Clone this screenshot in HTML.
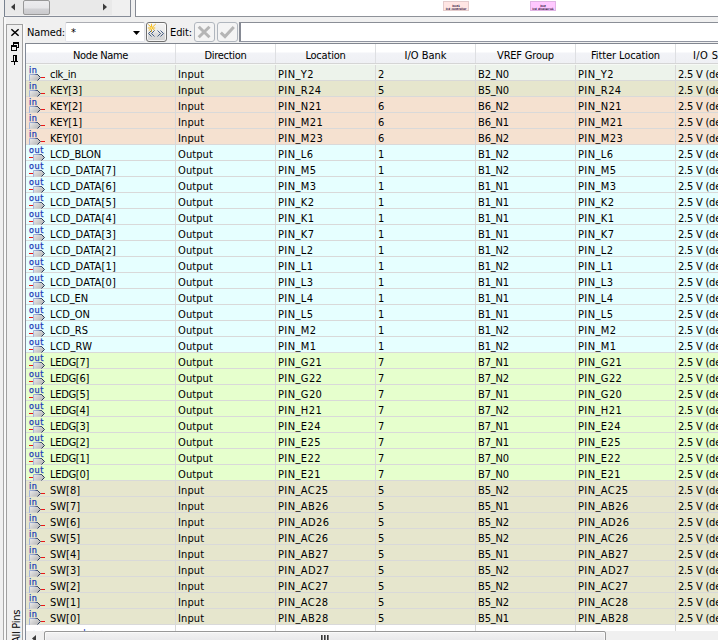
<!DOCTYPE html>
<html><head><meta charset="utf-8"><title>Pin Planner</title>
<style>
html,body{margin:0;padding:0;}
body{width:718px;height:640px;overflow:hidden;background:#f0f0f0;position:relative;font-family:"DejaVu Sans Condensed","DejaVu Sans","Liberation Sans",sans-serif;font-stretch:condensed;font-size:11px;color:#000;}
.abs{position:absolute;}
svg{position:absolute;overflow:visible}
/* top area */
#tl{left:4px;top:0;width:127px;height:17px;background:#f0f0f0;border-left:1px solid #78828f;border-right:1px solid #828893;border-bottom:1px solid #868c98;box-sizing:border-box;}
#trk{left:5px;top:0;width:107px;height:15px;background:#e9e9e9;}
#thumb1{left:23px;top:0;width:27px;height:15px;box-sizing:border-box;border:1px solid #989898;border-radius:2px;background:linear-gradient(#ececee 0,#e6e6e8 7px,#d2d2d5 8px,#cacacd 100%);}
#tr{left:135px;top:0;width:583px;height:17px;background:#fff;border-left:1px solid #868a93;border-bottom:1px solid #8e9299;box-sizing:border-box;}
.pk{top:1px;height:10px;width:26px;box-sizing:border-box;border:1px solid #e4cccc;font-size:3px;line-height:3px;font-weight:bold;text-align:center;color:#281038;padding-top:3px;overflow:hidden;letter-spacing:0;white-space:nowrap}
#pk1{left:443px;background:#ffe6e4;}
#pk2{left:530px;background:#ffc8ff;border-color:#e0b4e4}
/* left strip */
#vl{left:3px;top:17px;width:1px;height:623px;background:#a8a8a8}
#vl2{left:4px;top:17px;width:2px;height:623px;background:#f8f8f8}
#strip{left:6px;top:24px;width:17px;height:620px;box-sizing:border-box;border:1px solid #a0a0a0;background:#f0f0f0}
#vl3{left:23px;top:24px;width:2px;height:620px;background:#f8f8f8}
#allpins{left:10px;top:643px;width:60px;height:13px;line-height:13px;transform-origin:0 0;transform:rotate(-90deg);letter-spacing:-0.29px;white-space:nowrap}
/* toolbar */
#named{left:27px;top:22px;height:20px;line-height:21px;letter-spacing:-0.13px}
#combo{left:65px;top:22px;width:80px;height:20px;box-sizing:border-box;background:#fff;border:1px solid #e2e3ea;border-top-color:#abadb3;border-radius:2px;}
#star{left:71px;top:22px;height:20px;line-height:21px}
#btn1{left:146px;top:22px;width:21px;height:20px;box-sizing:border-box;border:1px solid #707070;border-radius:3px;background:linear-gradient(#f2f2f2 0,#ebebeb 9px,#dddddd 10px,#d2d2d2 100%);box-shadow:inset 0 0 0 1px rgba(255,255,255,.7)}
#edit{left:170px;top:22px;height:20px;line-height:21px;letter-spacing:-0.1px}
.dbtn{top:22px;width:21px;height:20px;box-sizing:border-box;border:1px solid #b0b6be;border-radius:3px;background:#f4f4f4}
#btn2{left:194px}#btn3{left:217px}
#field{left:239px;top:22px;width:490px;height:20px;box-sizing:border-box;background:#fff;border:1px solid #8a8e96;border-left:2px solid #868a94;border-bottom-color:#9094a0}
/* table frame */
#frame{left:25px;top:43px;width:693px;height:600px;background:#fff;border-left:1px solid #828a98;border-top:1px solid #828790;box-sizing:border-box;}
#hdr{left:26px;top:44px;width:692px;height:19px;background:linear-gradient(#fff 0,#fff 8px,#f2f3f7 9px,#eff0f4 19px);border-bottom:1px solid #d5d5d5;white-space:nowrap;}
.h{display:inline-block;vertical-align:top;height:19px;line-height:23px;box-sizing:border-box;border-right:1px solid #dedfe2;text-align:center;overflow:hidden;letter-spacing:-0.2px}
.h0{letter-spacing:-0.35px}
.h0{width:150px}.h1,.h2,.h3,.h4,.h5{width:100px}.h6{width:43px;border-right:0;text-align:left;padding-left:17px;letter-spacing:0.4px}
.h3{letter-spacing:0}.h5{letter-spacing:-0.1px}.h1{letter-spacing:-0.3px}
/* table */
.tbl{position:absolute;left:26px;top:64px;width:692px;}
.r{height:16px;display:block;white-space:nowrap;box-sizing:border-box;border-bottom:1px solid #d9d9d9;}
.r:first-child{height:17px;border-top:1px solid #f6f9f5}
.c{display:inline-block;vertical-align:top;height:15px;line-height:19px;box-sizing:border-box;border-right:1px solid #d9d9d9;padding-left:2px;}
.c0{width:150px;padding-left:0;position:relative}
.c1,.c2,.c3,.c4,.c5{width:100px}
.c1{letter-spacing:0.1px}.c2,.c5{letter-spacing:0.4px}.c3{letter-spacing:0}.c4{letter-spacing:-0.15px}
.c6{width:43px;border-right:0;letter-spacing:-0.22px}
.c0 em{font-style:normal;position:absolute;left:24px;top:0}
.ic{position:absolute;left:0;top:0;width:24px;height:16px;font-style:normal}
.ic b{position:absolute;left:3px;top:-1px;font-weight:normal;font-size:9px;line-height:12px;color:#1c3cb8;letter-spacing:0.6px;opacity:0.99;-webkit-text-stroke:0.25px #1c3cb8}
.ic svg{left:2px;top:0}
.b2{background:#edf3eb}.b5{background:#e6e6cd}.b6{background:#f5e1d0}.b1{background:#e6ffff}.b7{background:#e6ffcd}
.last{background:#fff;border-bottom:0;height:6px}
.last .c{height:6px}
/* bottom scrollbar */
#sb{left:26px;top:631px;width:692px;height:17px;background:#f0f0f0}
#thumb2{left:44px;top:631px;width:562px;height:17px;box-sizing:border-box;border:1px solid #989898;border-radius:2px;background:linear-gradient(#f3f3f3 0,#e9e9eb 8px,#d6d6d9 9px,#cbcbce 100%);box-shadow:inset 0 0 0 1px rgba(255,255,255,.6)}

.c u{text-decoration:none;position:relative;top:-1px}
.last .c0 em.nn{color:#2040c0;top:-1px;left:1px}

</style></head>
<body>
<div class="abs" id="tl"></div>
<div class="abs" id="trk"></div>
<div class="abs" id="thumb1"></div>
<svg style="left:10px;top:3px" width="100" height="9" viewBox="0 0 100 9"><path d="M5 0.5V7.5L1 4Z" fill="#3c3c3c"/><path d="M93 0.5V7.5L97 4Z" fill="#3c3c3c"/></svg>
<div class="abs" id="tr"></div>
<div class="abs pk" id="pk1">inst1<br>lcd_controller</div>
<div class="abs pk" id="pk2">inst<br>lcd_display:u1</div>
<div class="abs" id="vl"></div><div class="abs" id="vl2"></div>
<div class="abs" id="strip"></div><div class="abs" id="vl3"></div>
<svg style="left:11px;top:29px" width="8" height="36" viewBox="0 0 8 36">
<path d="M0.4 0.2L7.6 6.8M7.6 0.2L0.4 6.8" stroke="#000" stroke-width="1.5" fill="none"/>
<path d="M2 13h6v6h-2v-1h1v-3h-4v1h-1zM0 16h6v6h-6zM1 18v3h4v-3z" fill="#000" fill-rule="evenodd" shape-rendering="crispEdges"/>
<path d="M2 26h4v6h1v1h-3v3h-1v-3h-3v-1h2zM3 27v5h1v-5z" fill="#000" fill-rule="evenodd" shape-rendering="crispEdges"/>
</svg>
<div class="abs" id="allpins">All Pins</div>
<div class="abs" id="named">Named:</div>
<div class="abs" id="combo"></div>
<div class="abs" id="star">*</div>
<svg style="left:133px;top:31px" width="7" height="4" viewBox="0 0 7 4"><path d="M0 0H7L3.5 4Z" fill="#000"/></svg>
<div class="abs" id="btn1"></div>
<svg style="left:147px;top:23px" width="19" height="18" viewBox="0 0 19 18">
<path d="M4.5 0.8V9M0.8 5H8.2M1.3 1.5L7.8 7.6M8.8 1L1.8 7.6" stroke="#f7b500" stroke-width="0.85" fill="none"/><circle cx="4.5" cy="5" r="1.1" fill="#fbd040"/><circle cx="4.5" cy="5" r="0.6" fill="#fff6d0"/>
<path d="M4.5 7.5L1.5 10.5L4.5 13.5M7.5 7.5L4.5 10.5L7.5 13.5M10.5 7.5L13.5 10.5L10.5 13.5M13.5 7.5L16.5 10.5L13.5 13.5" stroke="#34507c" stroke-width="0.9" fill="none"/>
</svg>
<div class="abs" id="edit">Edit:</div>
<div class="abs dbtn" id="btn2"></div>
<div class="abs dbtn" id="btn3"></div>
<svg style="left:194px;top:22px" width="44" height="20" viewBox="0 0 44 20">
<path d="M4.7 4.7L15.5 15.3M15.5 4.7L4.7 15.3" stroke="#b5b5b5" stroke-width="3" fill="none"/>
<path d="M26.8 10.6L31 14.6L39.8 5" stroke="#b5b5b5" stroke-width="3" fill="none"/>
</svg>
<div class="abs" id="field"></div>
<div class="abs" id="frame"></div>
<div class="abs" id="hdr"><span class="h h0">Node Name</span><span class="h h1">Direction</span><span class="h h2">Location</span><span class="h h3">I/O Bank</span><span class="h h4">VREF Group</span><span class="h h5">Fitter Location</span><span class="h h6">I/O Standard</span></div>
<svg width="0" height="0" style="left:0;top:0"><defs><linearGradient id="g" x1="0" y1="0" x2="1" y2="0.6"><stop offset="0" stop-color="#ececec"/><stop offset="1" stop-color="#b8b8b8"/></linearGradient><linearGradient id="gl" x1="0" y1="0" x2="1" y2="0"><stop offset="0" stop-color="#a4b4dc"/><stop offset="0.6" stop-color="#8c9cc4"/><stop offset="1" stop-color="#34446a"/></linearGradient></defs></svg>
<div class="tbl">
<div class="r b2"><span class="c c0"><i class="ic"><b>in</b><svg width="18" height="16" viewBox="0 0 18 16"><path d="M1.5 9.5H9.5L12.5 12.5L9.5 15.5H1.5Z" fill="url(#g)"/><path d="M1.5 16V9.5H9.5" stroke="url(#gl)" fill="none"/><path d="M9 9.5H9.5L12.5 12.5L9.5 15.5" stroke="#2c3c5c" fill="none"/><path d="M13 12.5H17" stroke="#e81818"/></svg></i><em style="letter-spacing:-0.3px">clk<u>_</u>in</em></span><span class="c c1">Input</span><span class="c c2">PIN<u>_</u>Y2</span><span class="c c3">2</span><span class="c c4">B2<u>_</u>N0</span><span class="c c5">PIN<u>_</u>Y2</span><span class="c c6">2.5 V (default)</span></div>
<div class="r b5"><span class="c c0"><i class="ic"><b>in</b><svg width="18" height="16" viewBox="0 0 18 16"><path d="M1.5 9.5H9.5L12.5 12.5L9.5 15.5H1.5Z" fill="url(#g)"/><path d="M1.5 16V9.5H9.5" stroke="url(#gl)" fill="none"/><path d="M9 9.5H9.5L12.5 12.5L9.5 15.5" stroke="#2c3c5c" fill="none"/><path d="M13 12.5H17" stroke="#e81818"/></svg></i><em style="letter-spacing:-0.15px">KEY[3]</em></span><span class="c c1">Input</span><span class="c c2">PIN<u>_</u>R24</span><span class="c c3">5</span><span class="c c4">B5<u>_</u>N0</span><span class="c c5">PIN<u>_</u>R24</span><span class="c c6">2.5 V (default)</span></div>
<div class="r b6"><span class="c c0"><i class="ic"><b>in</b><svg width="18" height="16" viewBox="0 0 18 16"><path d="M1.5 9.5H9.5L12.5 12.5L9.5 15.5H1.5Z" fill="url(#g)"/><path d="M1.5 16V9.5H9.5" stroke="url(#gl)" fill="none"/><path d="M9 9.5H9.5L12.5 12.5L9.5 15.5" stroke="#2c3c5c" fill="none"/><path d="M13 12.5H17" stroke="#e81818"/></svg></i><em style="letter-spacing:-0.15px">KEY[2]</em></span><span class="c c1">Input</span><span class="c c2">PIN<u>_</u>N21</span><span class="c c3">6</span><span class="c c4">B6<u>_</u>N2</span><span class="c c5">PIN<u>_</u>N21</span><span class="c c6">2.5 V (default)</span></div>
<div class="r b6"><span class="c c0"><i class="ic"><b>in</b><svg width="18" height="16" viewBox="0 0 18 16"><path d="M1.5 9.5H9.5L12.5 12.5L9.5 15.5H1.5Z" fill="url(#g)"/><path d="M1.5 16V9.5H9.5" stroke="url(#gl)" fill="none"/><path d="M9 9.5H9.5L12.5 12.5L9.5 15.5" stroke="#2c3c5c" fill="none"/><path d="M13 12.5H17" stroke="#e81818"/></svg></i><em style="letter-spacing:-0.15px">KEY[1]</em></span><span class="c c1">Input</span><span class="c c2">PIN<u>_</u>M21</span><span class="c c3">6</span><span class="c c4">B6<u>_</u>N1</span><span class="c c5">PIN<u>_</u>M21</span><span class="c c6">2.5 V (default)</span></div>
<div class="r b6"><span class="c c0"><i class="ic"><b>in</b><svg width="18" height="16" viewBox="0 0 18 16"><path d="M1.5 9.5H9.5L12.5 12.5L9.5 15.5H1.5Z" fill="url(#g)"/><path d="M1.5 16V9.5H9.5" stroke="url(#gl)" fill="none"/><path d="M9 9.5H9.5L12.5 12.5L9.5 15.5" stroke="#2c3c5c" fill="none"/><path d="M13 12.5H17" stroke="#e81818"/></svg></i><em style="letter-spacing:-0.15px">KEY[0]</em></span><span class="c c1">Input</span><span class="c c2">PIN<u>_</u>M23</span><span class="c c3">6</span><span class="c c4">B6<u>_</u>N2</span><span class="c c5">PIN<u>_</u>M23</span><span class="c c6">2.5 V (default)</span></div>
<div class="r b1"><span class="c c0"><i class="ic"><b>out</b><svg width="20" height="16" viewBox="0 0 20 16"><path d="M5.5 9.5H13.5L16.5 12.5L13.5 15.5H5.5Z" fill="url(#g)"/><path d="M5.5 16V9.5H13.5" stroke="url(#gl)" fill="none"/><path d="M13 9.5H13.5L16.5 12.5L13.5 15.5" stroke="#2c3c5c" fill="none"/><path d="M1 12.5H5" stroke="#e81818"/></svg></i><em style="letter-spacing:-0.15px">LCD<u>_</u>BLON</em></span><span class="c c1">Output</span><span class="c c2">PIN<u>_</u>L6</span><span class="c c3">1</span><span class="c c4">B1<u>_</u>N2</span><span class="c c5">PIN<u>_</u>L6</span><span class="c c6">2.5 V (default)</span></div>
<div class="r b1"><span class="c c0"><i class="ic"><b>out</b><svg width="20" height="16" viewBox="0 0 20 16"><path d="M5.5 9.5H13.5L16.5 12.5L13.5 15.5H5.5Z" fill="url(#g)"/><path d="M5.5 16V9.5H13.5" stroke="url(#gl)" fill="none"/><path d="M13 9.5H13.5L16.5 12.5L13.5 15.5" stroke="#2c3c5c" fill="none"/><path d="M1 12.5H5" stroke="#e81818"/></svg></i><em style="letter-spacing:0.15px">LCD<u>_</u>DATA[7]</em></span><span class="c c1">Output</span><span class="c c2">PIN<u>_</u>M5</span><span class="c c3">1</span><span class="c c4">B1<u>_</u>N2</span><span class="c c5">PIN<u>_</u>M5</span><span class="c c6">2.5 V (default)</span></div>
<div class="r b1"><span class="c c0"><i class="ic"><b>out</b><svg width="20" height="16" viewBox="0 0 20 16"><path d="M5.5 9.5H13.5L16.5 12.5L13.5 15.5H5.5Z" fill="url(#g)"/><path d="M5.5 16V9.5H13.5" stroke="url(#gl)" fill="none"/><path d="M13 9.5H13.5L16.5 12.5L13.5 15.5" stroke="#2c3c5c" fill="none"/><path d="M1 12.5H5" stroke="#e81818"/></svg></i><em style="letter-spacing:0.15px">LCD<u>_</u>DATA[6]</em></span><span class="c c1">Output</span><span class="c c2">PIN<u>_</u>M3</span><span class="c c3">1</span><span class="c c4">B1<u>_</u>N1</span><span class="c c5">PIN<u>_</u>M3</span><span class="c c6">2.5 V (default)</span></div>
<div class="r b1"><span class="c c0"><i class="ic"><b>out</b><svg width="20" height="16" viewBox="0 0 20 16"><path d="M5.5 9.5H13.5L16.5 12.5L13.5 15.5H5.5Z" fill="url(#g)"/><path d="M5.5 16V9.5H13.5" stroke="url(#gl)" fill="none"/><path d="M13 9.5H13.5L16.5 12.5L13.5 15.5" stroke="#2c3c5c" fill="none"/><path d="M1 12.5H5" stroke="#e81818"/></svg></i><em style="letter-spacing:0.15px">LCD<u>_</u>DATA[5]</em></span><span class="c c1">Output</span><span class="c c2">PIN<u>_</u>K2</span><span class="c c3">1</span><span class="c c4">B1<u>_</u>N1</span><span class="c c5">PIN<u>_</u>K2</span><span class="c c6">2.5 V (default)</span></div>
<div class="r b1"><span class="c c0"><i class="ic"><b>out</b><svg width="20" height="16" viewBox="0 0 20 16"><path d="M5.5 9.5H13.5L16.5 12.5L13.5 15.5H5.5Z" fill="url(#g)"/><path d="M5.5 16V9.5H13.5" stroke="url(#gl)" fill="none"/><path d="M13 9.5H13.5L16.5 12.5L13.5 15.5" stroke="#2c3c5c" fill="none"/><path d="M1 12.5H5" stroke="#e81818"/></svg></i><em style="letter-spacing:0.15px">LCD<u>_</u>DATA[4]</em></span><span class="c c1">Output</span><span class="c c2">PIN<u>_</u>K1</span><span class="c c3">1</span><span class="c c4">B1<u>_</u>N1</span><span class="c c5">PIN<u>_</u>K1</span><span class="c c6">2.5 V (default)</span></div>
<div class="r b1"><span class="c c0"><i class="ic"><b>out</b><svg width="20" height="16" viewBox="0 0 20 16"><path d="M5.5 9.5H13.5L16.5 12.5L13.5 15.5H5.5Z" fill="url(#g)"/><path d="M5.5 16V9.5H13.5" stroke="url(#gl)" fill="none"/><path d="M13 9.5H13.5L16.5 12.5L13.5 15.5" stroke="#2c3c5c" fill="none"/><path d="M1 12.5H5" stroke="#e81818"/></svg></i><em style="letter-spacing:0.15px">LCD<u>_</u>DATA[3]</em></span><span class="c c1">Output</span><span class="c c2">PIN<u>_</u>K7</span><span class="c c3">1</span><span class="c c4">B1<u>_</u>N1</span><span class="c c5">PIN<u>_</u>K7</span><span class="c c6">2.5 V (default)</span></div>
<div class="r b1"><span class="c c0"><i class="ic"><b>out</b><svg width="20" height="16" viewBox="0 0 20 16"><path d="M5.5 9.5H13.5L16.5 12.5L13.5 15.5H5.5Z" fill="url(#g)"/><path d="M5.5 16V9.5H13.5" stroke="url(#gl)" fill="none"/><path d="M13 9.5H13.5L16.5 12.5L13.5 15.5" stroke="#2c3c5c" fill="none"/><path d="M1 12.5H5" stroke="#e81818"/></svg></i><em style="letter-spacing:0.15px">LCD<u>_</u>DATA[2]</em></span><span class="c c1">Output</span><span class="c c2">PIN<u>_</u>L2</span><span class="c c3">1</span><span class="c c4">B1<u>_</u>N2</span><span class="c c5">PIN<u>_</u>L2</span><span class="c c6">2.5 V (default)</span></div>
<div class="r b1"><span class="c c0"><i class="ic"><b>out</b><svg width="20" height="16" viewBox="0 0 20 16"><path d="M5.5 9.5H13.5L16.5 12.5L13.5 15.5H5.5Z" fill="url(#g)"/><path d="M5.5 16V9.5H13.5" stroke="url(#gl)" fill="none"/><path d="M13 9.5H13.5L16.5 12.5L13.5 15.5" stroke="#2c3c5c" fill="none"/><path d="M1 12.5H5" stroke="#e81818"/></svg></i><em style="letter-spacing:0.15px">LCD<u>_</u>DATA[1]</em></span><span class="c c1">Output</span><span class="c c2">PIN<u>_</u>L1</span><span class="c c3">1</span><span class="c c4">B1<u>_</u>N2</span><span class="c c5">PIN<u>_</u>L1</span><span class="c c6">2.5 V (default)</span></div>
<div class="r b1"><span class="c c0"><i class="ic"><b>out</b><svg width="20" height="16" viewBox="0 0 20 16"><path d="M5.5 9.5H13.5L16.5 12.5L13.5 15.5H5.5Z" fill="url(#g)"/><path d="M5.5 16V9.5H13.5" stroke="url(#gl)" fill="none"/><path d="M13 9.5H13.5L16.5 12.5L13.5 15.5" stroke="#2c3c5c" fill="none"/><path d="M1 12.5H5" stroke="#e81818"/></svg></i><em style="letter-spacing:0.15px">LCD<u>_</u>DATA[0]</em></span><span class="c c1">Output</span><span class="c c2">PIN<u>_</u>L3</span><span class="c c3">1</span><span class="c c4">B1<u>_</u>N1</span><span class="c c5">PIN<u>_</u>L3</span><span class="c c6">2.5 V (default)</span></div>
<div class="r b1"><span class="c c0"><i class="ic"><b>out</b><svg width="20" height="16" viewBox="0 0 20 16"><path d="M5.5 9.5H13.5L16.5 12.5L13.5 15.5H5.5Z" fill="url(#g)"/><path d="M5.5 16V9.5H13.5" stroke="url(#gl)" fill="none"/><path d="M13 9.5H13.5L16.5 12.5L13.5 15.5" stroke="#2c3c5c" fill="none"/><path d="M1 12.5H5" stroke="#e81818"/></svg></i><em style="letter-spacing:-0.1px">LCD<u>_</u>EN</em></span><span class="c c1">Output</span><span class="c c2">PIN<u>_</u>L4</span><span class="c c3">1</span><span class="c c4">B1<u>_</u>N1</span><span class="c c5">PIN<u>_</u>L4</span><span class="c c6">2.5 V (default)</span></div>
<div class="r b1"><span class="c c0"><i class="ic"><b>out</b><svg width="20" height="16" viewBox="0 0 20 16"><path d="M5.5 9.5H13.5L16.5 12.5L13.5 15.5H5.5Z" fill="url(#g)"/><path d="M5.5 16V9.5H13.5" stroke="url(#gl)" fill="none"/><path d="M13 9.5H13.5L16.5 12.5L13.5 15.5" stroke="#2c3c5c" fill="none"/><path d="M1 12.5H5" stroke="#e81818"/></svg></i><em style="letter-spacing:-0.05px">LCD<u>_</u>ON</em></span><span class="c c1">Output</span><span class="c c2">PIN<u>_</u>L5</span><span class="c c3">1</span><span class="c c4">B1<u>_</u>N1</span><span class="c c5">PIN<u>_</u>L5</span><span class="c c6">2.5 V (default)</span></div>
<div class="r b1"><span class="c c0"><i class="ic"><b>out</b><svg width="20" height="16" viewBox="0 0 20 16"><path d="M5.5 9.5H13.5L16.5 12.5L13.5 15.5H5.5Z" fill="url(#g)"/><path d="M5.5 16V9.5H13.5" stroke="url(#gl)" fill="none"/><path d="M13 9.5H13.5L16.5 12.5L13.5 15.5" stroke="#2c3c5c" fill="none"/><path d="M1 12.5H5" stroke="#e81818"/></svg></i><em style="letter-spacing:-0.05px">LCD<u>_</u>RS</em></span><span class="c c1">Output</span><span class="c c2">PIN<u>_</u>M2</span><span class="c c3">1</span><span class="c c4">B1<u>_</u>N2</span><span class="c c5">PIN<u>_</u>M2</span><span class="c c6">2.5 V (default)</span></div>
<div class="r b1"><span class="c c0"><i class="ic"><b>out</b><svg width="20" height="16" viewBox="0 0 20 16"><path d="M5.5 9.5H13.5L16.5 12.5L13.5 15.5H5.5Z" fill="url(#g)"/><path d="M5.5 16V9.5H13.5" stroke="url(#gl)" fill="none"/><path d="M13 9.5H13.5L16.5 12.5L13.5 15.5" stroke="#2c3c5c" fill="none"/><path d="M1 12.5H5" stroke="#e81818"/></svg></i><em style="letter-spacing:0.15px">LCD<u>_</u>RW</em></span><span class="c c1">Output</span><span class="c c2">PIN<u>_</u>M1</span><span class="c c3">1</span><span class="c c4">B1<u>_</u>N2</span><span class="c c5">PIN<u>_</u>M1</span><span class="c c6">2.5 V (default)</span></div>
<div class="r b7"><span class="c c0"><i class="ic"><b>out</b><svg width="20" height="16" viewBox="0 0 20 16"><path d="M5.5 9.5H13.5L16.5 12.5L13.5 15.5H5.5Z" fill="url(#g)"/><path d="M5.5 16V9.5H13.5" stroke="url(#gl)" fill="none"/><path d="M13 9.5H13.5L16.5 12.5L13.5 15.5" stroke="#2c3c5c" fill="none"/><path d="M1 12.5H5" stroke="#e81818"/></svg></i><em style="letter-spacing:-0.3px">LEDG[7]</em></span><span class="c c1">Output</span><span class="c c2">PIN<u>_</u>G21</span><span class="c c3">7</span><span class="c c4">B7<u>_</u>N1</span><span class="c c5">PIN<u>_</u>G21</span><span class="c c6">2.5 V (default)</span></div>
<div class="r b7"><span class="c c0"><i class="ic"><b>out</b><svg width="20" height="16" viewBox="0 0 20 16"><path d="M5.5 9.5H13.5L16.5 12.5L13.5 15.5H5.5Z" fill="url(#g)"/><path d="M5.5 16V9.5H13.5" stroke="url(#gl)" fill="none"/><path d="M13 9.5H13.5L16.5 12.5L13.5 15.5" stroke="#2c3c5c" fill="none"/><path d="M1 12.5H5" stroke="#e81818"/></svg></i><em style="letter-spacing:-0.3px">LEDG[6]</em></span><span class="c c1">Output</span><span class="c c2">PIN<u>_</u>G22</span><span class="c c3">7</span><span class="c c4">B7<u>_</u>N2</span><span class="c c5">PIN<u>_</u>G22</span><span class="c c6">2.5 V (default)</span></div>
<div class="r b7"><span class="c c0"><i class="ic"><b>out</b><svg width="20" height="16" viewBox="0 0 20 16"><path d="M5.5 9.5H13.5L16.5 12.5L13.5 15.5H5.5Z" fill="url(#g)"/><path d="M5.5 16V9.5H13.5" stroke="url(#gl)" fill="none"/><path d="M13 9.5H13.5L16.5 12.5L13.5 15.5" stroke="#2c3c5c" fill="none"/><path d="M1 12.5H5" stroke="#e81818"/></svg></i><em style="letter-spacing:-0.3px">LEDG[5]</em></span><span class="c c1">Output</span><span class="c c2">PIN<u>_</u>G20</span><span class="c c3">7</span><span class="c c4">B7<u>_</u>N1</span><span class="c c5">PIN<u>_</u>G20</span><span class="c c6">2.5 V (default)</span></div>
<div class="r b7"><span class="c c0"><i class="ic"><b>out</b><svg width="20" height="16" viewBox="0 0 20 16"><path d="M5.5 9.5H13.5L16.5 12.5L13.5 15.5H5.5Z" fill="url(#g)"/><path d="M5.5 16V9.5H13.5" stroke="url(#gl)" fill="none"/><path d="M13 9.5H13.5L16.5 12.5L13.5 15.5" stroke="#2c3c5c" fill="none"/><path d="M1 12.5H5" stroke="#e81818"/></svg></i><em style="letter-spacing:-0.3px">LEDG[4]</em></span><span class="c c1">Output</span><span class="c c2">PIN<u>_</u>H21</span><span class="c c3">7</span><span class="c c4">B7<u>_</u>N2</span><span class="c c5">PIN<u>_</u>H21</span><span class="c c6">2.5 V (default)</span></div>
<div class="r b7"><span class="c c0"><i class="ic"><b>out</b><svg width="20" height="16" viewBox="0 0 20 16"><path d="M5.5 9.5H13.5L16.5 12.5L13.5 15.5H5.5Z" fill="url(#g)"/><path d="M5.5 16V9.5H13.5" stroke="url(#gl)" fill="none"/><path d="M13 9.5H13.5L16.5 12.5L13.5 15.5" stroke="#2c3c5c" fill="none"/><path d="M1 12.5H5" stroke="#e81818"/></svg></i><em style="letter-spacing:-0.3px">LEDG[3]</em></span><span class="c c1">Output</span><span class="c c2">PIN<u>_</u>E24</span><span class="c c3">7</span><span class="c c4">B7<u>_</u>N1</span><span class="c c5">PIN<u>_</u>E24</span><span class="c c6">2.5 V (default)</span></div>
<div class="r b7"><span class="c c0"><i class="ic"><b>out</b><svg width="20" height="16" viewBox="0 0 20 16"><path d="M5.5 9.5H13.5L16.5 12.5L13.5 15.5H5.5Z" fill="url(#g)"/><path d="M5.5 16V9.5H13.5" stroke="url(#gl)" fill="none"/><path d="M13 9.5H13.5L16.5 12.5L13.5 15.5" stroke="#2c3c5c" fill="none"/><path d="M1 12.5H5" stroke="#e81818"/></svg></i><em style="letter-spacing:-0.3px">LEDG[2]</em></span><span class="c c1">Output</span><span class="c c2">PIN<u>_</u>E25</span><span class="c c3">7</span><span class="c c4">B7<u>_</u>N1</span><span class="c c5">PIN<u>_</u>E25</span><span class="c c6">2.5 V (default)</span></div>
<div class="r b7"><span class="c c0"><i class="ic"><b>out</b><svg width="20" height="16" viewBox="0 0 20 16"><path d="M5.5 9.5H13.5L16.5 12.5L13.5 15.5H5.5Z" fill="url(#g)"/><path d="M5.5 16V9.5H13.5" stroke="url(#gl)" fill="none"/><path d="M13 9.5H13.5L16.5 12.5L13.5 15.5" stroke="#2c3c5c" fill="none"/><path d="M1 12.5H5" stroke="#e81818"/></svg></i><em style="letter-spacing:-0.3px">LEDG[1]</em></span><span class="c c1">Output</span><span class="c c2">PIN<u>_</u>E22</span><span class="c c3">7</span><span class="c c4">B7<u>_</u>N0</span><span class="c c5">PIN<u>_</u>E22</span><span class="c c6">2.5 V (default)</span></div>
<div class="r b7"><span class="c c0"><i class="ic"><b>out</b><svg width="20" height="16" viewBox="0 0 20 16"><path d="M5.5 9.5H13.5L16.5 12.5L13.5 15.5H5.5Z" fill="url(#g)"/><path d="M5.5 16V9.5H13.5" stroke="url(#gl)" fill="none"/><path d="M13 9.5H13.5L16.5 12.5L13.5 15.5" stroke="#2c3c5c" fill="none"/><path d="M1 12.5H5" stroke="#e81818"/></svg></i><em style="letter-spacing:-0.3px">LEDG[0]</em></span><span class="c c1">Output</span><span class="c c2">PIN<u>_</u>E21</span><span class="c c3">7</span><span class="c c4">B7<u>_</u>N0</span><span class="c c5">PIN<u>_</u>E21</span><span class="c c6">2.5 V (default)</span></div>
<div class="r b5"><span class="c c0"><i class="ic"><b>in</b><svg width="18" height="16" viewBox="0 0 18 16"><path d="M1.5 9.5H9.5L12.5 12.5L9.5 15.5H1.5Z" fill="url(#g)"/><path d="M1.5 16V9.5H9.5" stroke="url(#gl)" fill="none"/><path d="M9 9.5H9.5L12.5 12.5L9.5 15.5" stroke="#2c3c5c" fill="none"/><path d="M13 12.5H17" stroke="#e81818"/></svg></i><em style="letter-spacing:0px">SW[8]</em></span><span class="c c1">Input</span><span class="c c2">PIN<u>_</u>AC25</span><span class="c c3">5</span><span class="c c4">B5<u>_</u>N2</span><span class="c c5">PIN<u>_</u>AC25</span><span class="c c6">2.5 V (default)</span></div>
<div class="r b5"><span class="c c0"><i class="ic"><b>in</b><svg width="18" height="16" viewBox="0 0 18 16"><path d="M1.5 9.5H9.5L12.5 12.5L9.5 15.5H1.5Z" fill="url(#g)"/><path d="M1.5 16V9.5H9.5" stroke="url(#gl)" fill="none"/><path d="M9 9.5H9.5L12.5 12.5L9.5 15.5" stroke="#2c3c5c" fill="none"/><path d="M13 12.5H17" stroke="#e81818"/></svg></i><em style="letter-spacing:0px">SW[7]</em></span><span class="c c1">Input</span><span class="c c2">PIN<u>_</u>AB26</span><span class="c c3">5</span><span class="c c4">B5<u>_</u>N1</span><span class="c c5">PIN<u>_</u>AB26</span><span class="c c6">2.5 V (default)</span></div>
<div class="r b5"><span class="c c0"><i class="ic"><b>in</b><svg width="18" height="16" viewBox="0 0 18 16"><path d="M1.5 9.5H9.5L12.5 12.5L9.5 15.5H1.5Z" fill="url(#g)"/><path d="M1.5 16V9.5H9.5" stroke="url(#gl)" fill="none"/><path d="M9 9.5H9.5L12.5 12.5L9.5 15.5" stroke="#2c3c5c" fill="none"/><path d="M13 12.5H17" stroke="#e81818"/></svg></i><em style="letter-spacing:0px">SW[6]</em></span><span class="c c1">Input</span><span class="c c2">PIN<u>_</u>AD26</span><span class="c c3">5</span><span class="c c4">B5<u>_</u>N2</span><span class="c c5">PIN<u>_</u>AD26</span><span class="c c6">2.5 V (default)</span></div>
<div class="r b5"><span class="c c0"><i class="ic"><b>in</b><svg width="18" height="16" viewBox="0 0 18 16"><path d="M1.5 9.5H9.5L12.5 12.5L9.5 15.5H1.5Z" fill="url(#g)"/><path d="M1.5 16V9.5H9.5" stroke="url(#gl)" fill="none"/><path d="M9 9.5H9.5L12.5 12.5L9.5 15.5" stroke="#2c3c5c" fill="none"/><path d="M13 12.5H17" stroke="#e81818"/></svg></i><em style="letter-spacing:0px">SW[5]</em></span><span class="c c1">Input</span><span class="c c2">PIN<u>_</u>AC26</span><span class="c c3">5</span><span class="c c4">B5<u>_</u>N2</span><span class="c c5">PIN<u>_</u>AC26</span><span class="c c6">2.5 V (default)</span></div>
<div class="r b5"><span class="c c0"><i class="ic"><b>in</b><svg width="18" height="16" viewBox="0 0 18 16"><path d="M1.5 9.5H9.5L12.5 12.5L9.5 15.5H1.5Z" fill="url(#g)"/><path d="M1.5 16V9.5H9.5" stroke="url(#gl)" fill="none"/><path d="M9 9.5H9.5L12.5 12.5L9.5 15.5" stroke="#2c3c5c" fill="none"/><path d="M13 12.5H17" stroke="#e81818"/></svg></i><em style="letter-spacing:0px">SW[4]</em></span><span class="c c1">Input</span><span class="c c2">PIN<u>_</u>AB27</span><span class="c c3">5</span><span class="c c4">B5<u>_</u>N1</span><span class="c c5">PIN<u>_</u>AB27</span><span class="c c6">2.5 V (default)</span></div>
<div class="r b5"><span class="c c0"><i class="ic"><b>in</b><svg width="18" height="16" viewBox="0 0 18 16"><path d="M1.5 9.5H9.5L12.5 12.5L9.5 15.5H1.5Z" fill="url(#g)"/><path d="M1.5 16V9.5H9.5" stroke="url(#gl)" fill="none"/><path d="M9 9.5H9.5L12.5 12.5L9.5 15.5" stroke="#2c3c5c" fill="none"/><path d="M13 12.5H17" stroke="#e81818"/></svg></i><em style="letter-spacing:0px">SW[3]</em></span><span class="c c1">Input</span><span class="c c2">PIN<u>_</u>AD27</span><span class="c c3">5</span><span class="c c4">B5<u>_</u>N2</span><span class="c c5">PIN<u>_</u>AD27</span><span class="c c6">2.5 V (default)</span></div>
<div class="r b5"><span class="c c0"><i class="ic"><b>in</b><svg width="18" height="16" viewBox="0 0 18 16"><path d="M1.5 9.5H9.5L12.5 12.5L9.5 15.5H1.5Z" fill="url(#g)"/><path d="M1.5 16V9.5H9.5" stroke="url(#gl)" fill="none"/><path d="M9 9.5H9.5L12.5 12.5L9.5 15.5" stroke="#2c3c5c" fill="none"/><path d="M13 12.5H17" stroke="#e81818"/></svg></i><em style="letter-spacing:0px">SW[2]</em></span><span class="c c1">Input</span><span class="c c2">PIN<u>_</u>AC27</span><span class="c c3">5</span><span class="c c4">B5<u>_</u>N2</span><span class="c c5">PIN<u>_</u>AC27</span><span class="c c6">2.5 V (default)</span></div>
<div class="r b5"><span class="c c0"><i class="ic"><b>in</b><svg width="18" height="16" viewBox="0 0 18 16"><path d="M1.5 9.5H9.5L12.5 12.5L9.5 15.5H1.5Z" fill="url(#g)"/><path d="M1.5 16V9.5H9.5" stroke="url(#gl)" fill="none"/><path d="M9 9.5H9.5L12.5 12.5L9.5 15.5" stroke="#2c3c5c" fill="none"/><path d="M13 12.5H17" stroke="#e81818"/></svg></i><em style="letter-spacing:0px">SW[1]</em></span><span class="c c1">Input</span><span class="c c2">PIN<u>_</u>AC28</span><span class="c c3">5</span><span class="c c4">B5<u>_</u>N2</span><span class="c c5">PIN<u>_</u>AC28</span><span class="c c6">2.5 V (default)</span></div>
<div class="r b5"><span class="c c0"><i class="ic"><b>in</b><svg width="18" height="16" viewBox="0 0 18 16"><path d="M1.5 9.5H9.5L12.5 12.5L9.5 15.5H1.5Z" fill="url(#g)"/><path d="M1.5 16V9.5H9.5" stroke="url(#gl)" fill="none"/><path d="M9 9.5H9.5L12.5 12.5L9.5 15.5" stroke="#2c3c5c" fill="none"/><path d="M13 12.5H17" stroke="#e81818"/></svg></i><em style="letter-spacing:0px">SW[0]</em></span><span class="c c1">Input</span><span class="c c2">PIN<u>_</u>AB28</span><span class="c c3">5</span><span class="c c4">B5<u>_</u>N1</span><span class="c c5">PIN<u>_</u>AB28</span><span class="c c6">2.5 V (default)</span></div>
<div class="r last"><span class="c c0"><em class="nn">&lt;&lt;new node&gt;&gt;</em></span><span class="c c1"></span><span class="c c2"></span><span class="c c3"></span><span class="c c4"></span><span class="c c5"></span><span class="c c6"></span></div>
</div>
<div class="abs" id="sb"></div>
<div class="abs" id="thumb2"></div>
<svg style="left:31px;top:634px" width="6" height="9" viewBox="0 0 6 9"><path d="M5 1V8L1 4.5Z" fill="#3c3c3c"/></svg>
<svg style="left:320px;top:634px" width="10" height="8" viewBox="0 0 10 8"><path d="M0 0H10V8H0Z" fill="#f4f4f4" opacity="0.7"/><path d="M1.5 1V8M4.5 1V8M7.5 1V8" stroke="#383838" stroke-width="1"/><path d="M2.5 1V8M5.5 1V8M8.5 1V8" stroke="#7c7c7c" stroke-width="1"/></svg>
</body></html>
